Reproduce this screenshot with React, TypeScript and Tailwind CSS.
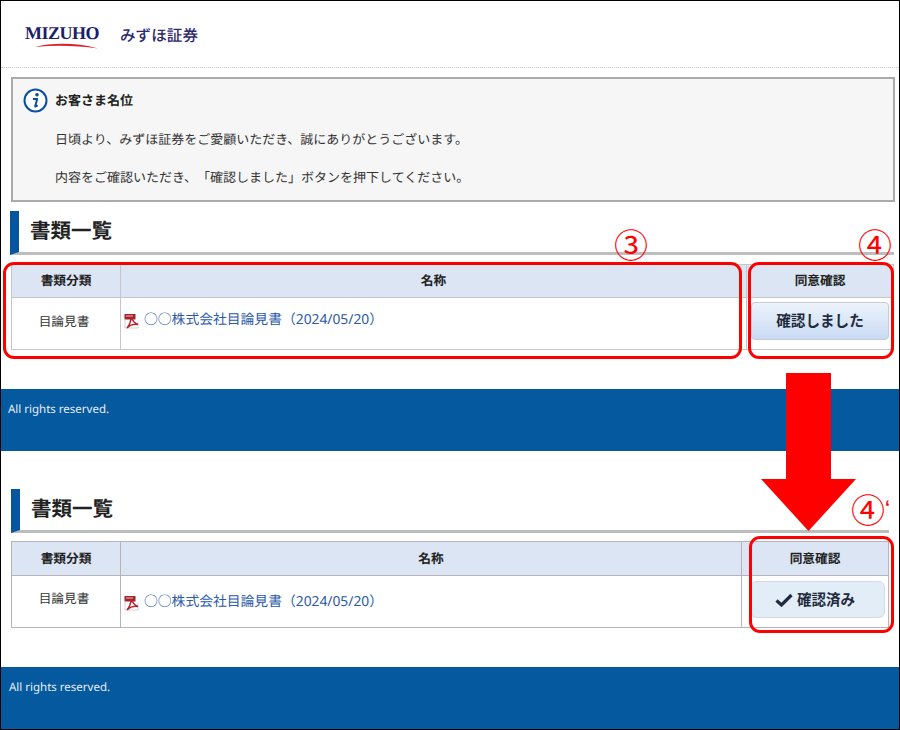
import React from "react";

const font = { fontFamily: '"Noto Sans", "Noto Sans CJK JP", sans-serif' };

function PdfIcon() {
  return (
    <svg width="16" height="16" viewBox="0 0 16 16" className="shrink-0">
      <rect x="0.500" y="1" width="11" height="5.500" fill="#a5222c" />
      <path d="M2 3h7" stroke="#e9c4c6" strokeWidth="1" />
      <path d="M1 6.500V15h13V8" fill="none" stroke="#d4d4d4" strokeWidth="1" />
      <path d="M7 4c1.500 4 3 6 7 7.500-4-.5-8 .5-11 3.500 2.500-3 4-6.500 4-11z" fill="none" stroke="#b3262e" strokeWidth="1.500" />
    </svg>
  );
}

function InfoIcon() {
  return (
    <svg width="25" height="25" viewBox="0 0 25 25" className="shrink-0">
      <circle cx="12.500" cy="12.500" r="11" fill="#ffffff" stroke="#0b4ea2" strokeWidth="2" />
      <circle cx="14" cy="6.800" r="1.800" fill="#0b4ea2" />
      <path d="M10 11h4.200l-2 7c-.2.8.5 1 2.400-.7" fill="none" stroke="#0b4ea2" strokeWidth="2" strokeLinejoin="round" />
    </svg>
  );
}

function Logo() {
  return (
    <div className="flex flex-col w-[74px] mt-[3px]">
      <span
        className="text-[18px] leading-[15px] font-bold text-[#1c1c6b] tracking-[-0.5px] whitespace-nowrap"
        style={{ fontFamily: '"Liberation Serif", serif' }}
      >
        MIZUHO
      </span>
      <svg width="74" height="7" viewBox="0 0 74 7" className="mt-[1px]">
        <path d="M10 5C26 1 50 0 73 6.500 52 3.500 30 3 10 5z" fill="#d9202c" />
      </svg>
    </div>
  );
}

function Heading({ x, w }: { x: string; w: string }) {
  return (
    <div className={`${x} ${w} h-[44px] flex items-center border-l-[9px] border-l-[#06559f] border-b-[3px] border-b-[#bdbdbd]`}>
      <h2 className="ml-[11px] text-[20.500px] font-bold text-[#222222] leading-none">書類一覧</h2>
    </div>
  );
}

type TableProps = {
  columns: string;
  width: string;
  line: string;
  headH: string;
  bodyH: string;
  kindPad: string;
  namePad: string;
  button: React.ReactNode;
  justify: string;
};

function DocTable({ columns, width, line, headH, bodyH, kindPad, namePad, button, justify }: TableProps) {
  const head = `flex items-center justify-center text-[12.700px] font-bold text-[#222222] bg-[#dbe5f4] border-r ${line} ${headH}`;
  const cell = `flex items-center text-[12.700px] text-[#333333] border-r ${line} ${bodyH}`;
  return (
    <div className={`ml-[10px] ${width} grid ${columns} border ${line}`}>
      <div className={`${head} border-b`}>書類分類</div>
      <div className={`${head} border-b`}>名称</div>
      <div className={`${head} border-b border-r-0`}>同意確認</div>
      <div className={`${cell} justify-center pr-[4px] ${kindPad}`}>目論見書</div>
      <div className={`${cell} pl-[3px] gap-[4px] ${namePad}`}>
        <PdfIcon />
        <a className="text-[#2a5aa8] text-[13.800px] whitespace-nowrap">○○株式会社目論見書（2024/05/20）</a>
      </div>
      <div className={`${bodyH} flex items-start ${justify}`}>{button}</div>
    </div>
  );
}

function Footer({ pad }: { pad: string }) {
  return (
    <footer className={`h-[62px] bg-[#05599f] flex items-start ${pad} pt-[13px]`}>
      <span className="text-[11.500px] leading-[16px] text-[#e6eef6]">All rights reserved.</span>
    </footer>
  );
}

const ring = "absolute border-[3px] border-[#ff0000] rounded-[11px] pointer-events-none";
const num = "absolute text-[#ff0000] text-[34px] leading-[30px] w-[32px] text-center";

export default function App() {
  return (
    <div className="relative w-[900px] h-[730px] bg-white border border-black overflow-hidden [text-rendering:geometricPrecision] [text-spacing-trim:space-all]" style={font}>
      <header className="h-[67px] flex items-center border-b border-dotted border-[#c9c4cf] pl-[24px] pt-[3px]">
        <Logo />
        <span className="ml-[21px] mt-[1px] text-[15.600px] font-medium text-[#2c2a6b] leading-none">みずほ証券</span>
      </header>

      <section className="ml-[10px] mt-[9px] w-[884px] h-[125px] border-2 border-[#ababab] bg-[#f6f6f6] text-[13px] text-[#333333]">
        <div className="flex items-center gap-[7px] pl-[10px] pt-[9px]">
          <InfoIcon />
          <span className="font-bold text-[#222222] mt-[1px]">お客さま名位</span>
        </div>
        <p className="ml-[42px] mt-[17px] leading-[18px]">日頃より、みずほ証券をご愛顧いただき、誠にありがとうございます。</p>
        <p className="ml-[42px] mt-[20px] leading-[18px]">内容をご確認いただき、「確認しました」ボタンを押下してください。</p>
      </section>

      <div className="mt-[9px]">
        <Heading x="ml-[9px]" w="w-[884px]" />
      </div>
      <div className="mt-[9px]">
        <DocTable
          width="w-[883px]"
          line="border-[#c6c6c8]"
          columns="grid-cols-[109px_626px_1fr]"
          headH="h-[33px]"
          bodyH="h-[51px]"
          kindPad="pb-[3px]"
          namePad="pb-[6px]"
          justify="justify-center"
          button={
            <button className="mt-[4px] w-[138px] h-[38px] rounded-[4px] border border-[#c5ccd6] bg-gradient-to-b from-[#edf3fc] to-[#c9daf3] text-[14.600px] font-bold text-[#222b3c]">
              確認しました
            </button>
          }
        />
      </div>

      <div className="mt-[39px]">
        <Footer pad="pl-[7px]" />
      </div>

      <div className="mt-[38px]">
        <Heading x="ml-[10px]" w="w-[878px]" />
      </div>
      <div className="mt-[8px]">
        <DocTable
          width="w-[878px]"
          line="border-[#b7b2bb]"
          columns="grid-cols-[109px_621px_1fr]"
          headH="h-[34px]"
          bodyH="h-[51px]"
          kindPad="pb-[5px]"
          namePad="pt-[2px]"
          justify="justify-end pr-[3px]"
          button={
            <button className="mt-[5px] w-[135px] h-[37px] rounded-[6px] border border-[#d3dbe4] bg-[#e3edf8] text-[14.500px] font-bold text-[#222b3c] flex items-center justify-center gap-[4px] pr-[5px]">
              <svg width="18" height="14" viewBox="0 0 18 14">
                <path d="M1.500 7.500 6.500 12 16.500 2" fill="none" stroke="#1f2b44" strokeWidth="3.200" />
              </svg>
              確認済み
            </button>
          }
        />
      </div>

      <div className="mt-[39px]">
        <Footer pad="pl-[8px]" />
      </div>

      <div className={ring} style={{ left: 2, top: 261, width: 739, height: 97 }} />
      <div className={ring} style={{ left: 747, top: 261, width: 146, height: 97 }} />
      <div className={ring} style={{ left: 748, top: 535, width: 145, height: 97 }} />

      <span className={num} style={{ left: 613, top: 229 }}>③</span>
      <span className={num} style={{ left: 857, top: 229 }}>④</span>
      <span className={num} style={{ left: 850, top: 494 }}>④</span>
      <span className="absolute text-[#ff0000] font-bold text-[18px] leading-none" style={{ left: 884, top: 497, fontFamily: '"Liberation Sans", sans-serif' }}>‘</span>

      <svg className="absolute" style={{ left: 759, top: 372 }} width="97" height="159" viewBox="0 0 97 159">
        <path d="M26 0h45v106h25l-47.500 52L1 106h25z" fill="#ff0000" />
      </svg>
    </div>
  );
}
